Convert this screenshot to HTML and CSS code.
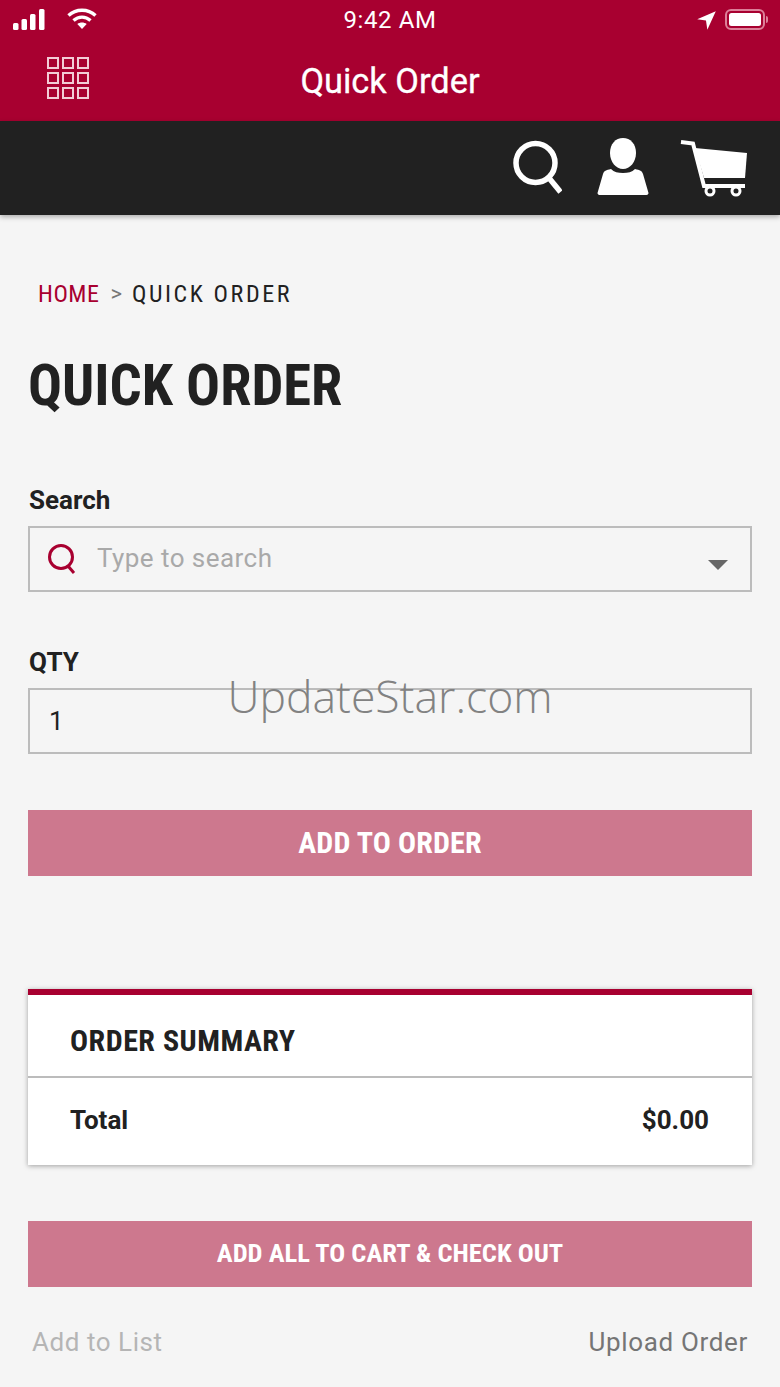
FILE: index.html
```html
<!DOCTYPE html>
<html lang="en">
<head>
<meta charset="utf-8">
<title>Quick Order</title>
<link rel="stylesheet" href="styles.css">
</head>
<body>
<div class="app">
  <header class="top">
    <div class="status">
      <div class="status-left">
        <svg class="sig" width="32" height="21" viewBox="0 0 32 21"><rect x="0" y="14" width="5.500" height="7" rx="1.500"/><rect x="8.500" y="10" width="5.500" height="11" rx="1.500"/><rect x="17" y="5" width="5.500" height="16" rx="1.500"/><rect x="26" y="0" width="5.500" height="21" rx="1.500"/></svg>
        <svg class="wifi" width="30" height="22" viewBox="0 0 30 22"><path d="M1.500 7.500C9 .5 21 .5 28.500 7.500"/><path d="M6.500 12.500C11.500 8 18.500 8 23.500 12.500"/><path class="wifi-dot" d="M15 21l-4.700-5c2.700-2 6.700-2 9.400 0z"/></svg>
      </div>
      <span class="clock">9:42 AM</span>
      <div class="status-right">
        <svg class="loc" width="19" height="19" viewBox="0 0 18 18"><path d="M17.800.200L.200 7.800l8.300 1.300 1.300 8.700z"/></svg>
        <div class="batt"><div class="batt-body"><div class="batt-fill"></div></div><div class="batt-cap"></div></div>
      </div>
    </div>
    <div class="titlebar">
      <svg class="grid" width="42" height="42" viewBox="0 0 42 42"><g><rect x="1" y="1" width="10" height="10"/><rect x="16" y="1" width="10" height="10"/><rect x="31" y="1" width="10" height="10"/><rect x="1" y="16" width="10" height="10"/><rect x="16" y="16" width="10" height="10"/><rect x="31" y="16" width="10" height="10"/><rect x="1" y="31" width="10" height="10"/><rect x="16" y="31" width="10" height="10"/><rect x="31" y="31" width="10" height="10"/></g></svg>
      <h2 class="apptitle">Quick Order</h2>
    </div>
  </header>
  <nav class="iconbar">
    <svg class="ic-search" width="50" height="56" viewBox="0 0 50 56"><circle cx="23.500" cy="24" r="19.500"/><path d="M37 39l11.500 14"/></svg>
    <svg class="ic-user" width="52" height="58" viewBox="0 0 52 58"><path d="M26 0c7.500 0 13 6 13 15 0 9-6 16-13 16s-13-7-13-16C13 6 18.500 0 26 0z"/><path d="M14 31c3 3 7 4 12 4s9-1 12-4c5 1 7 2 8 5l5.500 19c0 1-1 2-2 2H2.500c-1 0-2-1-2-2L6 36c1-3 3-4 8-5z"/></svg>
    <svg class="ic-cart" width="68" height="58" viewBox="0 0 68 58"><path class="cart-line" d="M1 3l12 1.500 11 42.500h41"/><path d="M15 9l52 5-2 25H24z"/><circle class="wheel" cx="30" cy="52" r="4"/><circle class="wheel" cx="56" cy="52" r="4"/></svg>
  </nav>
  <main class="content">
    <div class="crumbs"><a class="crumb-home">HOME</a><span class="crumb-sep">&gt;</span><span class="crumb-cur">QUICK ORDER</span></div>
    <h1 class="pagetitle cond">QUICK ORDER</h1>
    <label class="lbl lbl-search">Search</label>
    <div class="field field-search">
      <svg class="field-ic" width="30" height="32" viewBox="0 0 30 32"><circle cx="14" cy="14" r="11.500"/><path d="M21 23l6 7"/></svg>
      <span class="ph">Type to search</span>
      <span class="caret"></span>
    </div>
    <label class="lbl lbl-qty">QTY</label>
    <div class="field"><span class="val">1</span></div>
    <button class="btn btn-add cond">ADD TO ORDER</button>
    <section class="card">
      <h3 class="card-head cond">ORDER SUMMARY</h3>
      <div class="card-row"><span>Total</span><span>$0.00</span></div>
    </section>
    <button class="btn btn-all cond">ADD ALL TO CART &amp; CHECK OUT</button>
    <div class="links"><a class="link-off">Add to List</a><a class="link-on">Upload Order</a></div>
  </main>
  <div class="watermark">UpdateStar.com</div>
</div>
</body>
</html>
```
FILE: styles.css
```css
* { box-sizing: border-box; }
html, body { margin: 0; padding: 0; }
body { background: #f5f5f5; font-family: Roboto, "Liberation Sans", sans-serif; color: #212121; }
.app { position: relative; width: 780px; height: 1387px; overflow: hidden; }
.top { background: #a80030; height: 121px; color: #fff; }
.status { height: 40px; padding: 9px 12px 0 13px; display: flex; align-items: flex-start; justify-content: space-between; position: relative; }
.status-left { display: flex; gap: 22px; }
.wifi { margin-top: -1px; fill: none; stroke: #fff; stroke-width: 3.400; }
.sig { fill: #fff; }
.wifi-dot { fill: #fff; stroke: none; }
.clock { position: absolute; left: 0; right: 0; top: 7px; text-align: center; font-size: 24px; line-height: 26px; letter-spacing: .6px; }
.status-right { display: flex; gap: 9px; align-items: center; }
.loc { fill: #fff; margin-top: 1px; }
.batt { display: flex; align-items: center; gap: 1px; }
.batt-body { width: 40px; height: 21px; border: 2px solid #dc8099; border-radius: 6px; padding: 2px; }
.batt-fill { width: 100%; height: 100%; background: #fff; border-radius: 2.500px; }
.batt-cap { width: 2px; height: 7px; background: #dc8099; border-radius: 0 2px 2px 0; }
.titlebar { height: 81px; display: flex; align-items: center; justify-content: center; position: relative; }
.grid { position: absolute; left: 47px; top: 17px; fill: none; stroke: #f2ccd6; stroke-width: 2; }
.apptitle { margin: 0; font-size: 34.400px; font-weight: 400; line-height: 40px; -webkit-text-stroke: .3px #fff; }
.iconbar { position: relative; z-index: 1; height: 94px; background: #212121; box-shadow: 0 2px 5px rgba(0,0,0,.3); display: flex; justify-content: flex-end; align-items: flex-start; padding: 17px 32px 0 0; color: #fff; }
.ic-search { fill: none; stroke: #fff; stroke-width: 5.500; margin: 1px 0 0; }
.ic-user { fill: #fff; margin: 0 0 0 35px; }
.ic-cart { fill: #fff; margin: 1px 0 0 31px; }
.cart-line { fill: none; stroke: #fff; stroke-width: 4; }
.wheel { fill: #212121; stroke: #fff; stroke-width: 3; }
.content { padding: 0 28px; }
.crumbs { margin: 66px 0 0 10px; height: 26px; display: flex; align-items: center; font-size: 24px; font-stretch: 75%; letter-spacing: 2.600px; line-height: 26px; }
.crumb-home { color: #a80030; letter-spacing: .5px; }
.crumb-sep { margin: 0 10px 0 11px; font-size: 22px; letter-spacing: 0; color: #777; font-stretch: 100%; }
.pagetitle { margin: 44px 0 0; font-size: 56.500px; line-height: 70px; font-weight: 700; }
.cond { font-stretch: 75%; }
.lbl { display: block; padding-left: 1px; font-size: 26px; font-weight: 700; line-height: 30px; }
.lbl-search { margin-top: 64px; }
.lbl-qty { margin-top: 55px; }
.field { margin-top: 11px; height: 66px; border: 2px solid #bcbcbc; display: flex; align-items: center; position: relative; }
.field-ic { margin-left: 17px; fill: none; stroke: #a80030; stroke-width: 3; }
.ph { margin-left: 20px; padding-bottom: 2px; font-size: 26px; letter-spacing: .45px; color: #a9a9a9; }
.val { margin-left: 19px; font-size: 26px; }
.caret { position: absolute; right: 22px; top: 32px; border-left: 10px solid transparent; border-right: 10px solid transparent; border-top: 10px solid #666; }
.btn { display: block; width: 100%; height: 66px; border: 0; background: #cd788e; color: #fff; font-family: inherit; font-weight: 700; padding: 0; }
.btn-add { margin-top: 56px; padding-bottom: 2px; font-size: 30px; letter-spacing: .15px; }
.btn-all { margin-top: 56px; padding-bottom: 4px; font-size: 26.500px; }
.card { margin-top: 113px; background: #fff; border-top: 6px solid #a80030; box-shadow: 0 1px 5px rgba(0,0,0,.35); height: 176px; }
.card-head { margin: 0; height: 83px; padding: 6px 0 0 42px; border-bottom: 2px solid #bcbcbc; font-size: 30px; letter-spacing: .5px; font-weight: 700; line-height: 80px; }
.card-row { display: flex; justify-content: space-between; padding: 0 43px 0 42px; font-size: 26px; font-weight: 700; line-height: 84px; }
.links { margin-top: 38px; display: flex; justify-content: space-between; padding: 0 4px; font-size: 26px; line-height: 34px; letter-spacing: .55px; }
.link-off { color: #b5b5b5; }
.link-on { color: #757575; letter-spacing: .65px; }
.watermark { position: absolute; left: 0; right: 0; top: 666px; text-align: center; font-family: "Open Sans", sans-serif; font-weight: 350; font-size: 44.500px; line-height: 60px; color: #828282; }
```
